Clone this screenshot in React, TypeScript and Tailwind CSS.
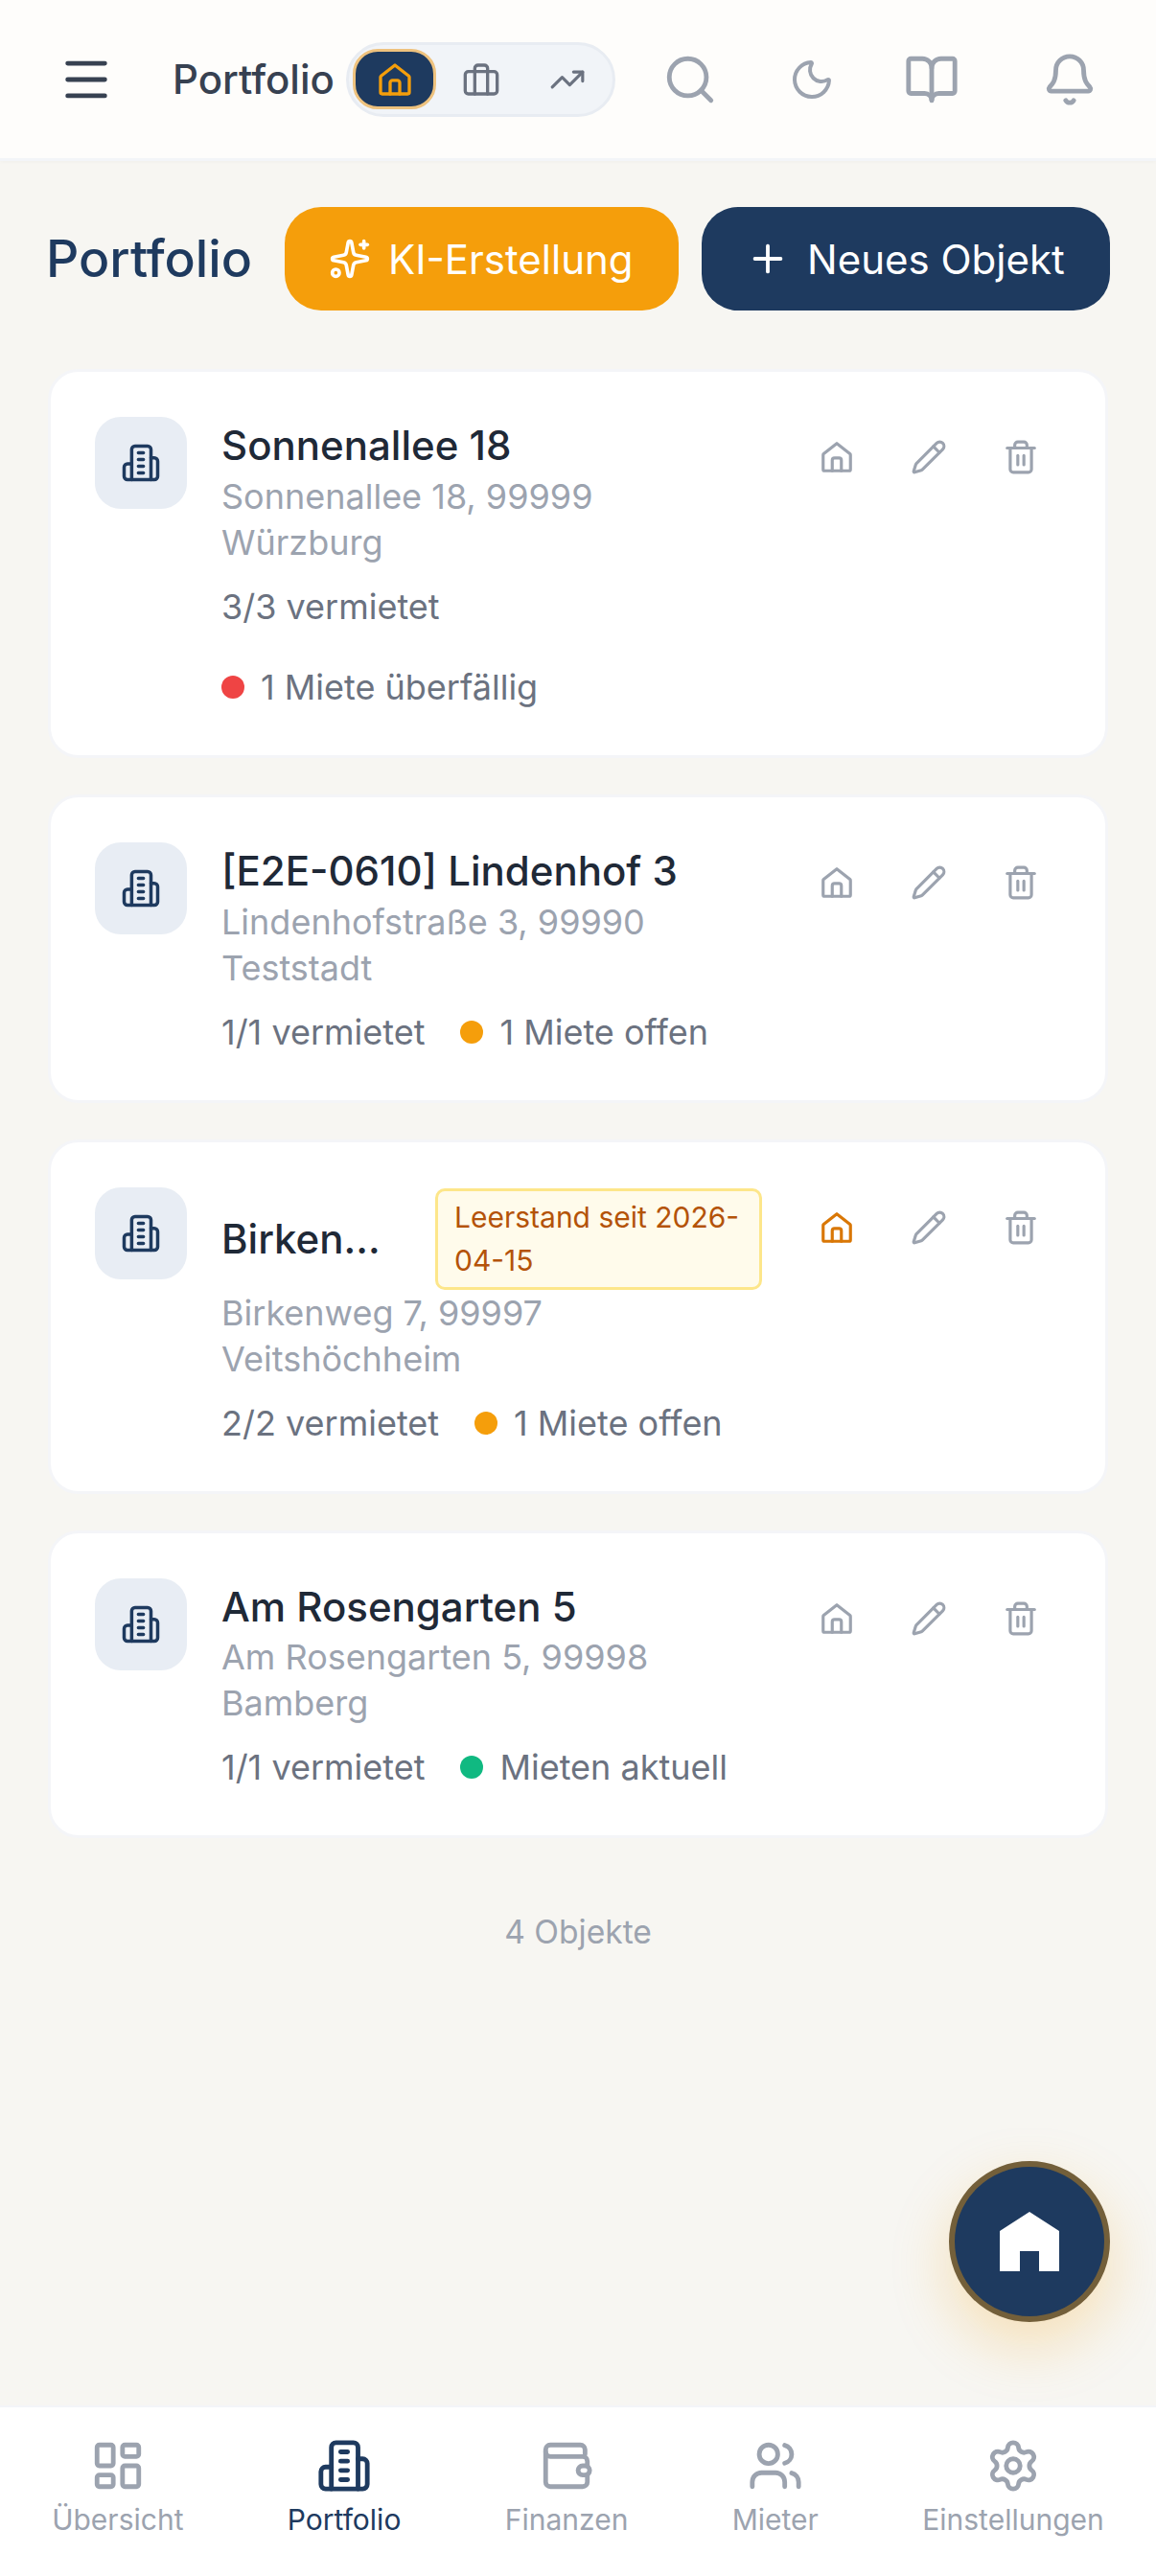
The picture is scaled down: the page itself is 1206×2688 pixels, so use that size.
import React from 'react';
import { Menu, TrendingUp, Search, Moon, BookOpen, Bell, Sparkles, Plus, Pencil, Trash2, LayoutDashboard, Users, Settings } from 'lucide-react';

const HomeIcon: React.FC<{ className?: string }> = ({ className }) => (
  <svg viewBox="0 0 24 24" fill="none" stroke="currentColor" strokeWidth="2" strokeLinecap="round" strokeLinejoin="round" className={className}>
    <path d="M4 21a1 1 0 0 1-1-1v-9.500a1 1 0 0 1 .35-.76L12 3l8.650 6.740a1 1 0 0 1 .35.76V20a1 1 0 0 1-1 1z" />
    <path d="M9 21v-7a1.500 1.500 0 0 1 1.500-1.500h3A1.500 1.500 0 0 1 15 14v7" />
  </svg>
);

const BuildingIcon: React.FC<{ className?: string }> = ({ className }) => (
  <svg viewBox="0 0 24 24" fill="none" stroke="currentColor" strokeWidth="2" strokeLinecap="round" strokeLinejoin="round" className={className}>
    <path d="M6.500 22V4a2 2 0 0 1 2-2h7.500a2 2 0 0 1 2 2v18" />
    <path d="M18 9h2a2 2 0 0 1 2 2v9a2 2 0 0 1-2 2H4a2 2 0 0 1-2-2v-5.500a2 2 0 0 1 2-2h2.500" />
    <path d="M10.500 6h3M10.500 10h3M10.500 14h3M10.500 18h3" />
  </svg>
);

const CaseIcon: React.FC<{ className?: string }> = ({ className }) => (
  <svg viewBox="0 0 24 24" fill="none" stroke="currentColor" strokeWidth="2" strokeLinecap="round" strokeLinejoin="round" className={className}>
    <rect x="2" y="7" width="20" height="14" rx="2" />
    <path d="M16 21V5a2 2 0 0 0-2-2h-4a2 2 0 0 0-2 2v16" />
  </svg>
);

const WalletIcon: React.FC<{ className?: string }> = ({ className }) => (
  <svg viewBox="0 0 24 24" fill="none" stroke="currentColor" strokeWidth="2" strokeLinecap="round" strokeLinejoin="round" className={className}>
    <path d="M20 7V5a2 2 0 0 0-2-2H5a2 2 0 0 0-2 2v14a2 2 0 0 0 2 2h14a2 2 0 0 0 2-2v-3" />
    <path d="M3 6a2 2 0 0 0 2 2h14a2 2 0 0 1 2 2v2" />
    <rect x="17" y="12" width="5" height="4" rx="2" />
  </svg>
);

type Property = {
  name: string;
  address: string;
  units: string;
  status: string;
  dot: string;
  vacancy?: string;
};

const properties: Property[] = [
  { name: 'Sonnenallee 18', address: 'Sonnenallee 18, 99999 Würzburg', units: '3/3 vermietet', status: '1 Miete überfällig', dot: 'bg-[#ef4444]' },
  { name: '[E2E-0610] Lindenhof 3', address: 'Lindenhofstraße 3, 99990 Teststadt', units: '1/1 vermietet', status: '1 Miete offen', dot: 'bg-[#f59e0b]' },
  { name: 'Birkenweg 7', address: 'Birkenweg 7, 99997 Veitshöchheim', units: '2/2 vermietet', status: '1 Miete offen', dot: 'bg-[#f59e0b]', vacancy: 'Leerstand seit 2026-04-15' },
  { name: 'Am Rosengarten 5', address: 'Am Rosengarten 5, 99998 Bamberg', units: '1/1 vermietet', status: 'Mieten aktuell', dot: 'bg-[#10b981]' },
];

const PropertyCard: React.FC<{ property: Property }> = ({ property }) => (
  <div className="flex gap-[36px] rounded-[32px] border-[3px] border-[#f4f5f8] bg-white pt-[47px] pr-[46px] pb-[47px] pl-[46px]">
    <div className="flex h-[96px] w-[96px] shrink-0 items-center justify-center rounded-[27px] bg-[#e8edf4] text-[#1e3a5f]">
      <BuildingIcon className="h-[42px] w-[42px]" />
    </div>
    <div className="flex min-w-0 flex-1 gap-[36px]">
      <div className="min-w-0 flex-1 pt-[1px]">
        <div className="flex items-center gap-[34px]">
          <h3 className="min-w-0 flex-1 truncate text-[42px] leading-[57.75px] font-medium text-[#1f2937]">{property.name}</h3>
          {property.vacancy && (
            <span className="w-[341px] shrink-0 rounded-[10px] border-[3px] border-[#fde68a] bg-[#fffbeb] px-[17px] py-[5px] text-[30px] leading-[45px] text-[#b45309]">
              {property.vacancy}
            </span>
          )}
        </div>
        <p className="text-[36px] leading-[48px] text-[#9ca3af]">{property.address}</p>
        <div className="mt-[19px] flex flex-wrap items-center gap-x-[37px] gap-y-[36px] text-[36px] leading-[48px] text-[#6b7280]">
          <span>{property.units}</span>
          <span className="flex items-center gap-[17px]">
            <span className={`h-[24px] w-[24px] rounded-full ${property.dot}`} />
            {property.status}
          </span>
        </div>
      </div>
      <div className="flex shrink-0 items-start gap-[12px] text-[#9ca3af]">
        <button className={`flex h-[84px] w-[84px] items-center justify-center ${property.vacancy ? 'text-[#d97706]' : ''}`}>
          <HomeIcon className="h-[38px] w-[38px]" />
        </button>
        <button className="flex h-[84px] w-[84px] items-center justify-center">
          <Pencil size={38} />
        </button>
        <button className="flex h-[84px] w-[84px] items-center justify-center">
          <Trash2 size={38} />
        </button>
      </div>
    </div>
  </div>
);

const navItems = [
  { label: 'Übersicht', icon: <LayoutDashboard size={58} /> },
  { label: 'Portfolio', icon: <BuildingIcon className="h-[58px] w-[58px]" />, active: true },
  { label: 'Finanzen', icon: <WalletIcon className="h-[58px] w-[58px]" /> },
  { label: 'Mieter', icon: <Users size={58} /> },
  { label: 'Einstellungen', icon: <Settings size={58} /> },
];

export default function App() {
  return (
    <div className="relative flex h-[2688px] w-[1206px] flex-col overflow-hidden bg-[#f7f6f2] font-['Inter',sans-serif]">
      <header className="flex h-[168px] shrink-0 items-center border-b-[3px] border-[#f3f5f8] bg-[#fefdfb] shadow-[0_2px_3px_rgba(0,0,0,0.02)]">
        <button className="ml-[61px] flex w-[58px] items-center justify-center text-[#374151]">
          <Menu size={58} />
        </button>
        <span className="ml-[61px] w-[167px] text-[42px] font-medium text-[#374151]">Portfolio</span>
        <div className="ml-[14px] flex h-[78px] w-[281px] items-center gap-[3px] rounded-full border-[3px] border-[#e8ecf2] bg-[#f1f4f8] pl-[4px]">
          <div className="flex h-[63px] w-[87px] items-center justify-center rounded-[26px] border-[3px] border-[#eec27e] bg-[#1e3a5f] text-[#f59e0b]">
            <HomeIcon className="h-[40px] w-[40px]" />
          </div>
          <div className="flex w-[87px] items-center justify-center text-[#6b7280]">
            <CaseIcon className="h-[40px] w-[40px]" />
          </div>
          <div className="flex w-[87px] items-center justify-center text-[#6b7280]">
            <TrendingUp size={38} />
          </div>
        </div>
        <div className="ml-[30px] flex items-center text-[#9ca3af]">
          <button className="flex w-[96px] justify-center"><Search size={58} /></button>
          <button className="ml-[31px] flex w-[96px] justify-center"><Moon size={48} /></button>
          <button className="ml-[29px] flex w-[96px] justify-center"><BookOpen size={58} /></button>
          <button className="ml-[48px] flex w-[96px] justify-center"><Bell size={58} /></button>
        </div>
      </header>

      <main className="flex-1 px-[50px] pt-[48px]">
        <div className="flex w-[1108px] items-center">
          <h1 className="ml-[-2px] w-[216px] shrink-0 text-[53.5px] font-medium text-[#1e3a5f]">Portfolio</h1>
          <button className="ml-[33px] flex h-[108px] w-[411px] shrink-0 items-center gap-[18px] rounded-[38px] bg-[#f59e0b] pl-[46px] text-[42px] text-white">
            <Sparkles size={44} />
            KI-Erstellung
          </button>
          <button className="ml-[24px] flex h-[108px] w-[426px] shrink-0 items-center gap-[18px] rounded-[38px] bg-[#1e3a5f] pl-[46px] text-[42px] text-white">
            <Plus size={46} />
            Neues Objekt
          </button>
        </div>

        <div className="mt-[61px] flex flex-col gap-[38px]">
          {properties.map(property => (
            <PropertyCard key={property.name} property={property} />
          ))}
        </div>

        <p className="mt-[74px] text-center text-[33.6px] leading-[48px] text-[#9ca3af]">4 Objekte</p>
      </main>

      <nav className="flex h-[178px] shrink-0 justify-around border-t-[2px] border-[#f3f5f8] bg-white pt-[32px]">
        {navItems.map(item => (
          <div key={item.label} className={`flex flex-col items-center gap-[8px] ${item.active ? 'text-[#1e3a5f]' : 'text-[#9ca3af]'}`}>
            {item.icon}
            <span className="text-[30px] leading-[38.4px]">{item.label}</span>
          </div>
        ))}
      </nav>

      <button className="absolute right-[48px] bottom-[265px] flex h-[168px] w-[168px] items-center justify-center rounded-full border-[6px] border-[#735f3a] bg-[#1e3a5f] shadow-[0_24px_60px_rgba(245,158,11,0.25)]">
        <svg viewBox="0 0 62 62" className="h-[62px] w-[62px]" fill="#ffffff">
          <polygon points="31,0 62,20 62,62 41,62 41,41 21,41 21,62 0,62 0,20" />
        </svg>
      </button>
    </div>
  );
}
